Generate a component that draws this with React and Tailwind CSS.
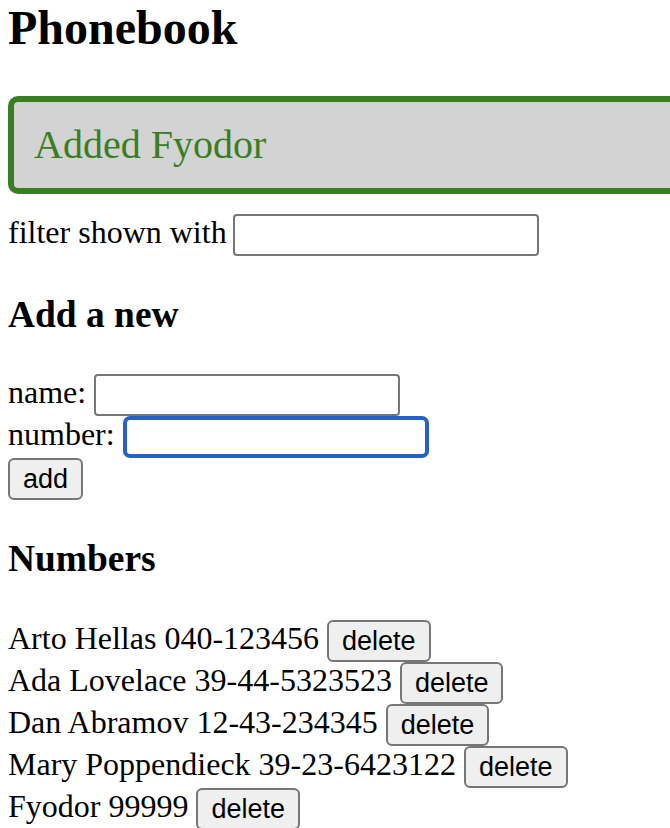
import { useState } from "react";

const initialPersons = [
  { name: "Arto Hellas", number: "040-123456" },
  { name: "Ada Lovelace", number: "39-44-5323523" },
  { name: "Dan Abramov", number: "12-43-234345" },
  { name: "Mary Poppendieck", number: "39-23-6423122" },
  { name: "Fyodor", number: "99999" },
];

const inputBase =
  "w-[306px] h-[42px] px-[4px] py-[2px] bg-white text-[26.67px] font-['Liberation_Sans',Arial,sans-serif] outline-none";
const inputClass = `${inputBase} border-2 border-[#767676] rounded-[4px]`;
const focusedInputClass = `${inputBase} border-[4px] border-[#2462c8] rounded-[7px]`;

const buttonClass =
  "h-[42px] px-[13px] bg-[#efefef] border-2 border-[#767676] rounded-[6px] text-[27px] leading-[30px] font-['Liberation_Sans',Arial,sans-serif] text-black";

const rowClass = "flex items-start h-[42px] gap-[8px] leading-[37px]";

function Notification({ message }) {
  if (!message) return null;
  return (
    <div className="mr-[-40px] mb-[20px] p-[20px] bg-[#d3d3d3] border-[6px] border-solid border-[#3a7d23] rounded-[10px] text-[40px] leading-[46px] text-[#3a7d23]">
      {message}
    </div>
  );
}

export default function App() {
  const [persons] = useState(initialPersons);
  const [filter, setFilter] = useState("");
  const [newName, setNewName] = useState("");
  const [newNumber, setNewNumber] = useState("");

  const shown = persons.filter((p) =>
    p.name.toLowerCase().includes(filter.toLowerCase())
  );

  return (
    <div className="w-[670px] h-[828px] overflow-hidden bg-white pl-[8px] font-['Liberation_Serif','Times_New_Roman',serif] text-[32px] leading-[37px] text-black">
      <h2 className="text-[48px] leading-[55px] font-bold mb-[41px]">Phonebook</h2>

      <Notification message="Added Fyodor" />

      <div className="flex items-start h-[42px] gap-[6px] leading-[37px]">
        <span>filter shown with</span>
        <input
          className={inputClass}
          value={filter}
          onChange={(e) => setFilter(e.target.value)}
        />
      </div>

      <h3 className="text-[37.44px] leading-[43px] font-bold my-[37.44px]">Add a new</h3>

      <form onSubmit={(e) => e.preventDefault()}>
        <div className={rowClass}>
          <span>name:</span>
          <input
            className={inputClass}
            value={newName}
            onChange={(e) => setNewName(e.target.value)}
          />
        </div>
        <div className={rowClass}>
          <span>number:</span>
          <input
            className={focusedInputClass}
            value={newNumber}
            onChange={(e) => setNewNumber(e.target.value)}
          />
        </div>
        <div className={rowClass}>
          <button type="submit" className={buttonClass}>
            add
          </button>
        </div>
      </form>

      <h3 className="text-[37.44px] leading-[43px] font-bold mt-[37.44px] mb-[40px]">Numbers</h3>

      {shown.map((p) => (
        <div key={p.name} className={rowClass}>
          <span>
            {p.name} {p.number}
          </span>
          <button className={buttonClass}>delete</button>
        </div>
      ))}
    </div>
  );
}
